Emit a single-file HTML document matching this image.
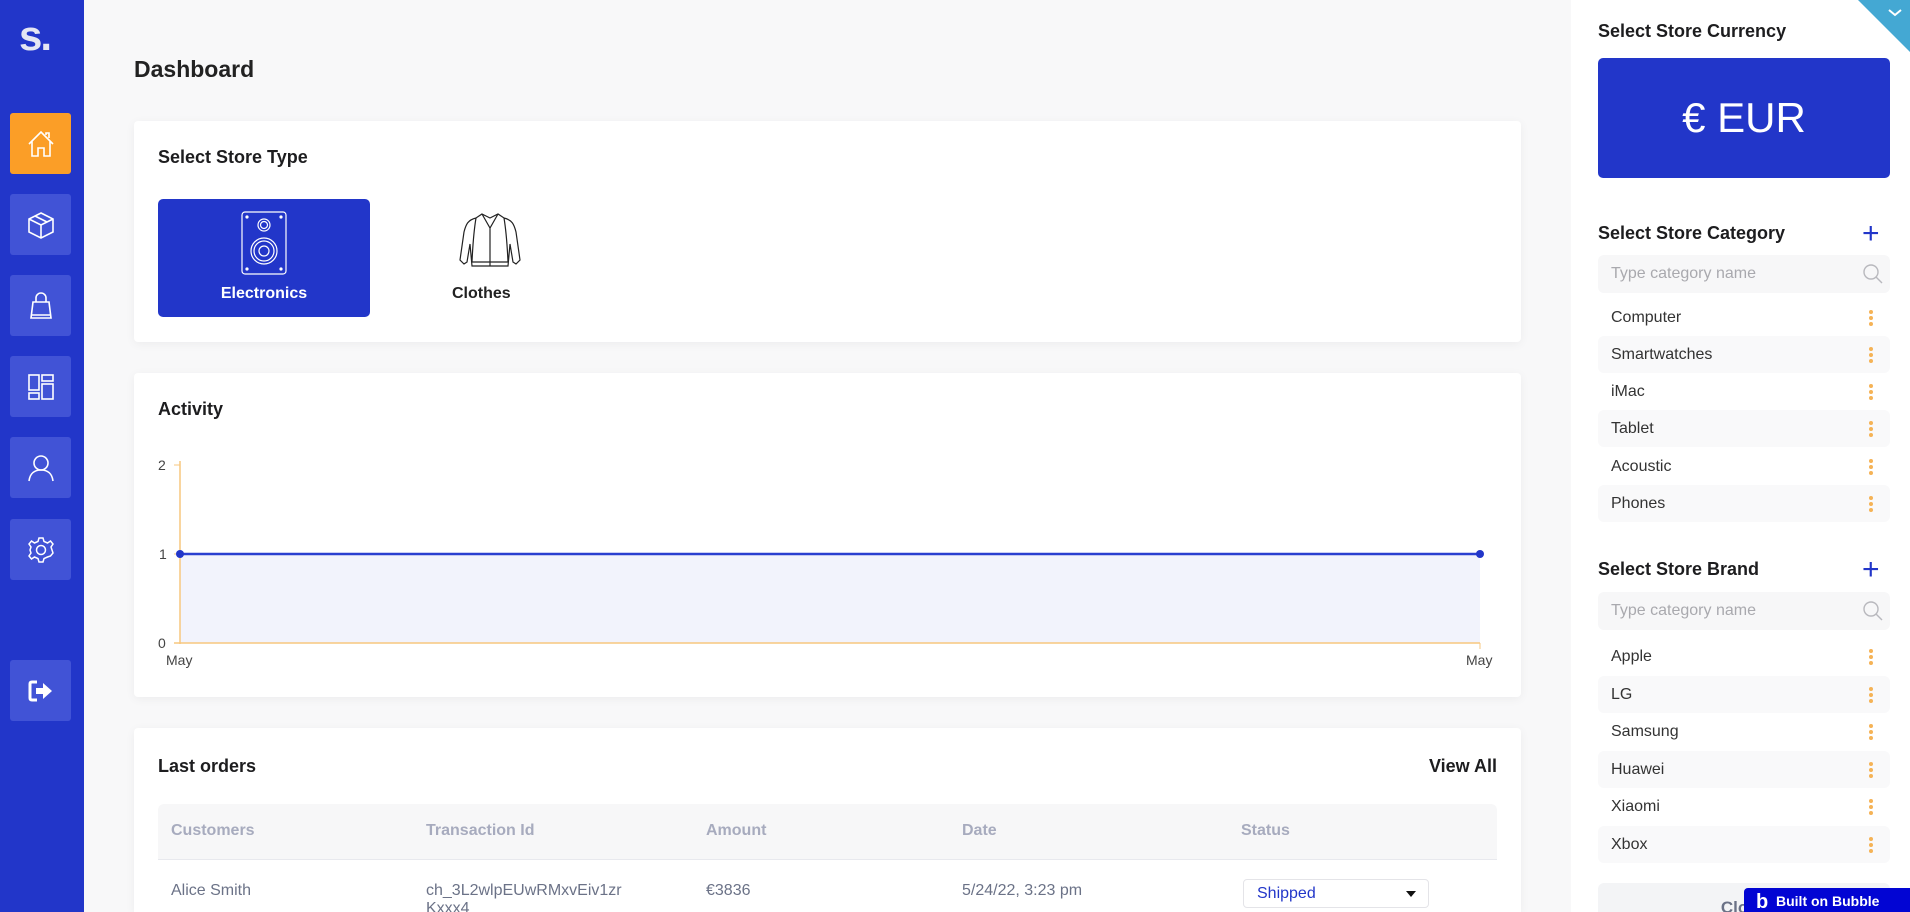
<!DOCTYPE html>
<html style="width:1910px;height:912px;overflow:hidden"><head><meta charset="utf-8"><style>
*{box-sizing:border-box;margin:0;padding:0}
body{width:1910px;height:912px;overflow:hidden;background:#f8f8f9;font-family:"Liberation Sans",sans-serif;position:relative;color:#1d1d1f}
.abs{position:absolute}
.side{left:0;top:0;width:84px;height:912px;background:#2236c9}
.nb{position:absolute;left:10px;width:61px;height:61px;background:#4153d6;border-radius:3px;display:flex;align-items:center;justify-content:center}
.card{position:absolute;left:134px;width:1387px;background:#fff;border-radius:4px;box-shadow:0 2px 10px rgba(0,0,0,.05);overflow:hidden}
.h{font-size:18px;font-weight:bold;color:#1d1d1f}
.right{left:1571px;top:0;width:339px;height:912px;background:#fff}
.item{position:absolute;left:1598px;width:292px;height:37px;border-radius:6px;font-size:16px;color:#333;padding:0 0 0 13px;line-height:37px}
.item.g{background:#f9f9fa}
.dots{position:absolute;right:17px;top:11px;width:4px}
.dots i{display:block;width:4px;height:4px;border-radius:2px;background:#f5b356;margin-bottom:2px}
.search{position:absolute;left:1598px;width:292px;height:38px;background:#f7f7f8;border-radius:6px;font-size:16px;color:#a9a9ae;padding-left:13px;line-height:38px}
.th{position:absolute;top:831px;font-size:16px;font-weight:bold;color:#a7abbe;transform:translateY(-50%)}
.td{position:absolute;top:891px;font-size:16px;color:#6b7287;transform:translateY(-50%)}
</style></head><body>
<div class="abs side">
 <div class="abs" style="left:19px;top:12px;font-size:42px;font-weight:900;color:#e4e6f3;letter-spacing:-2px">s.</div>
 <div class="nb" style="top:113px;background:#fb9e27"><svg width="30" height="30" viewBox="0 0 30 30" fill="none" stroke="#fff" stroke-width="1.6"><path d="M3 15 L15 3 L27 15 M6 12 V27 H12 V19 H18 V27 H24 V12 M20 6 V4 H23 V9"/></svg></div>
 <div class="nb" style="top:194px"><svg width="30" height="30" viewBox="0 0 30 30" fill="none" stroke="#fff" stroke-width="1.6"><path d="M15 3 L27 9 V22 L15 28 L3 22 V9 Z M3 9 L15 15 L27 9 M15 15 V28 M9 6 L21 12"/></svg></div>
 <div class="nb" style="top:275px"><svg width="30" height="30" viewBox="0 0 30 30" fill="none" stroke="#fff" stroke-width="1.6"><path d="M7 11 H23 L25 27 H5 Z M10 11 V7 A5 5 0 0 1 20 7 V11 M5 24 H25"/></svg></div>
 <div class="nb" style="top:356px"><svg width="30" height="30" viewBox="0 0 30 30" fill="none" stroke="#fff" stroke-width="1.6"><rect x="3" y="3" width="10" height="15"/><rect x="3" y="21" width="10" height="6"/><rect x="16" y="3" width="11" height="6"/><rect x="16" y="12" width="11" height="15"/></svg></div>
 <div class="nb" style="top:437px"><svg width="30" height="30" viewBox="0 0 30 30" fill="none" stroke="#fff" stroke-width="1.6"><circle cx="15" cy="10" r="7"/><path d="M3 28 C4 20 9 17 15 17 C21 17 26 20 27 28"/></svg></div>
 <div class="nb" style="top:519px"><svg width="30" height="30" viewBox="0 0 30 30" fill="none" stroke="#fff" stroke-width="1.5"><circle cx="15" cy="15" r="4.5"/><path d="M13 3 H17 L18 6.5 L21.5 8 L24.5 6 L27 9 L25 12 L26 15 L27 18 L24.5 21 L21.5 22 L18 23.5 L17 27 H13 L12 23.5 L8.5 22 L5.5 24 L3 21 L5 18 L4 15 L5 12 L3 9 L5.5 6 L8.5 8 L12 6.5 Z"/></svg></div>
 <div class="nb" style="top:660px"><svg width="30" height="30" viewBox="0 0 30 30"><path d="M11 6 H6 Q4 6 4 8 V22 Q4 24 6 24 H11" fill="none" stroke="#fff" stroke-width="3"/><path d="M10 12 H17 V7 L26 15 L17 23 V18 H10 Z" fill="#fff"/></svg></div>
</div>

<div class="abs" style="left:134px;top:56px;font-size:23px;font-weight:bold;color:#222">Dashboard</div>

<div class="card" style="top:121px;height:221px">
 <div class="abs h" style="left:24px;top:26px">Select Store Type</div>
 <div class="abs" style="left:24px;top:78px;width:212px;height:118px;background:#2236c9;border-radius:5px">
  <svg class="abs" style="left:82px;top:12px" width="48" height="64" viewBox="0 0 48 64" fill="none" stroke="#fff" stroke-width="1.2"><rect x="2" y="1" width="44" height="62" rx="3"/><circle cx="24" cy="14" r="6"/><circle cx="24" cy="14" r="3.5"/><circle cx="24" cy="40" r="13"/><circle cx="24" cy="40" r="10"/><circle cx="24" cy="40" r="5"/><circle cx="7" cy="6" r="1" fill="#fff"/><circle cx="41" cy="6" r="1" fill="#fff"/><circle cx="7" cy="58" r="1" fill="#fff"/><circle cx="41" cy="58" r="1" fill="#fff"/></svg>
  <div class="abs" style="left:0;width:212px;text-align:center;top:86px;color:#fff;font-size:16px;font-weight:bold">Electronics</div>
 </div>
 <svg class="abs" style="left:324px;top:89px" width="64" height="64" viewBox="0 0 64 64" fill="none" stroke="#222" stroke-width="1.2"><path d="M24 4 L32 8 L40 4 L46 8 C54 10 56 14 58 22 L62 50 L58 54 L55 52 L52 34 L50 56 H14 L12 34 L9 52 L6 54 L2 50 L6 22 C8 14 10 10 18 8 Z M24 4 L32 18 L40 4 M32 18 V56 M14 52 H50 M18 8 C16 20 15 30 14 52 M46 8 C48 20 49 30 50 52"/></svg>
 <div class="abs" style="left:318px;top:164px;font-size:16px;font-weight:bold;color:#222">Clothes</div>
</div>

<div class="card" style="top:373px;height:324px">
 <div class="abs h" style="left:24px;top:26px">Activity</div>
</div>
<svg class="abs" style="left:134px;top:373px" width="1387" height="324">
 <rect x="46" y="181" width="1300" height="89" fill="#f2f3fc"/>
 <line x1="46" y1="88" x2="46" y2="271" stroke="#f7c77f" stroke-width="1.5"/>
 <line x1="40" y1="270" x2="1346" y2="270" stroke="#f7c77f" stroke-width="1.5"/>
 <line x1="40" y1="92" x2="46" y2="92" stroke="#f7c77f"/>
 <line x1="40" y1="181" x2="46" y2="181" stroke="#f7c77f"/>
 <line x1="1346" y1="270" x2="1346" y2="276" stroke="#f7c77f"/>
 <line x1="46" y1="181" x2="1346" y2="181" stroke="#2a3fd0" stroke-width="2.5"/>
 <circle cx="46" cy="181" r="4" fill="#2236c9"/><circle cx="1346" cy="181" r="4" fill="#2236c9"/>
 <g font-family="Liberation Sans" font-size="14" fill="#444"><text x="24" y="97">2</text><text x="25" y="186">1</text><text x="24" y="275">0</text><text x="32" y="292">May</text><text x="1332" y="292">May</text></g>
</svg>

<div class="card" style="top:728px;height:184px;border-radius:4px 4px 0 0">
 <div class="abs h" style="left:24px;top:28px">Last orders</div>
 <div class="abs h" style="right:24px;top:28px">View All</div>
 <div class="abs" style="left:24px;top:76px;width:1339px;height:56px;background:#f7f7f8;border-radius:6px 6px 0 0;border-bottom:1px solid #e8e9ee"></div>
 <div class="abs" style="left:292px;top:172px;font-size:16px;color:#6b7287">Kxxx4</div>
</div>
<div class="th" style="left:171px">Customers</div>
<div class="th" style="left:426px">Transaction Id</div>
<div class="th" style="left:706px">Amount</div>
<div class="th" style="left:962px">Date</div>
<div class="th" style="left:1241px">Status</div>
<div class="td" style="left:171px">Alice Smith</div>
<div class="td" style="left:426px">ch_3L2wlpEUwRMxvEiv1zr</div>
<div class="td" style="left:706px">€3836</div>
<div class="td" style="left:962px">5/24/22, 3:23 pm</div>
<div class="abs" style="left:1243px;top:879px;width:186px;height:29px;border:1px solid #e4e4e8;border-radius:4px;background:#fff;font-size:16px;color:#2236c9;padding-left:13px;line-height:27px">Shipped<span class="abs" style="right:12px;top:11px;width:0;height:0;border-left:5px solid transparent;border-right:5px solid transparent;border-top:6px solid #111"></span></div>

<div class="abs right"></div>
<div class="abs h" style="left:1598px;top:21px">Select Store Currency</div>
<div class="abs" style="left:1598px;top:58px;width:292px;height:120px;background:#2236c9;border-radius:5px;color:#fff;font-size:42px;text-align:center;line-height:120px">€ EUR</div>
<div class="abs h" style="left:1598px;top:223px">Select Store Category</div>
<div class="abs" style="left:1862px;top:222px;color:#2236c9;font-size:30px;line-height:24px">+</div>
<div class="search" style="top:255px">Type category name</div>
<svg class="abs" style="left:1862px;top:263px" width="22" height="22" viewBox="0 0 22 22" fill="none" stroke="#b8b8bd" stroke-width="1.4"><circle cx="9" cy="9" r="7"/><path d="M14 14 L20 20"/></svg>
<div class="item" style="top:299px">Computer<div class="dots"><i></i><i></i><i></i></div></div>
<div class="item g" style="top:336px">Smartwatches<div class="dots"><i></i><i></i><i></i></div></div>
<div class="item" style="top:373px">iMac<div class="dots"><i></i><i></i><i></i></div></div>
<div class="item g" style="top:410px">Tablet<div class="dots"><i></i><i></i><i></i></div></div>
<div class="item" style="top:448px">Acoustic<div class="dots"><i></i><i></i><i></i></div></div>
<div class="item g" style="top:485px">Phones<div class="dots"><i></i><i></i><i></i></div></div>

<div class="abs h" style="left:1598px;top:559px">Select Store Brand</div>
<div class="abs" style="left:1862px;top:558px;color:#2236c9;font-size:30px;line-height:24px">+</div>
<div class="search" style="top:592px">Type category name</div>
<svg class="abs" style="left:1862px;top:600px" width="22" height="22" viewBox="0 0 22 22" fill="none" stroke="#b8b8bd" stroke-width="1.4"><circle cx="9" cy="9" r="7"/><path d="M14 14 L20 20"/></svg>
<div class="item" style="top:638px">Apple<div class="dots"><i></i><i></i><i></i></div></div>
<div class="item g" style="top:676px">LG<div class="dots"><i></i><i></i><i></i></div></div>
<div class="item" style="top:713px">Samsung<div class="dots"><i></i><i></i><i></i></div></div>
<div class="item g" style="top:751px">Huawei<div class="dots"><i></i><i></i><i></i></div></div>
<div class="item" style="top:788px">Xiaomi<div class="dots"><i></i><i></i><i></i></div></div>
<div class="item g" style="top:826px">Xbox<div class="dots"><i></i><i></i><i></i></div></div>
<div class="abs" style="left:1598px;top:883px;width:292px;height:29px;background:#f3f4f6;border-radius:6px 6px 0 0;font-size:17px;font-weight:bold;color:#6b7287;text-align:center;line-height:50px;overflow:hidden">Close</div>
<div class="abs" style="left:1744px;top:888px;width:166px;height:24px;background:#0205d3;border-radius:4px 0 0 0;color:#fff;font-size:14px;font-weight:bold;line-height:26px;padding-left:12px;overflow:hidden"><span style="font-size:20px;vertical-align:-2px">b</span>&nbsp; Built on Bubble</div>
<svg class="abs" style="left:1858px;top:0" width="52" height="52"><path d="M0 0 H52 V52 Z" fill="#44a8d3"/><path d="M31 10 L37 15 L43 10" fill="none" stroke="#fff" stroke-width="2"/></svg>
</body></html>
